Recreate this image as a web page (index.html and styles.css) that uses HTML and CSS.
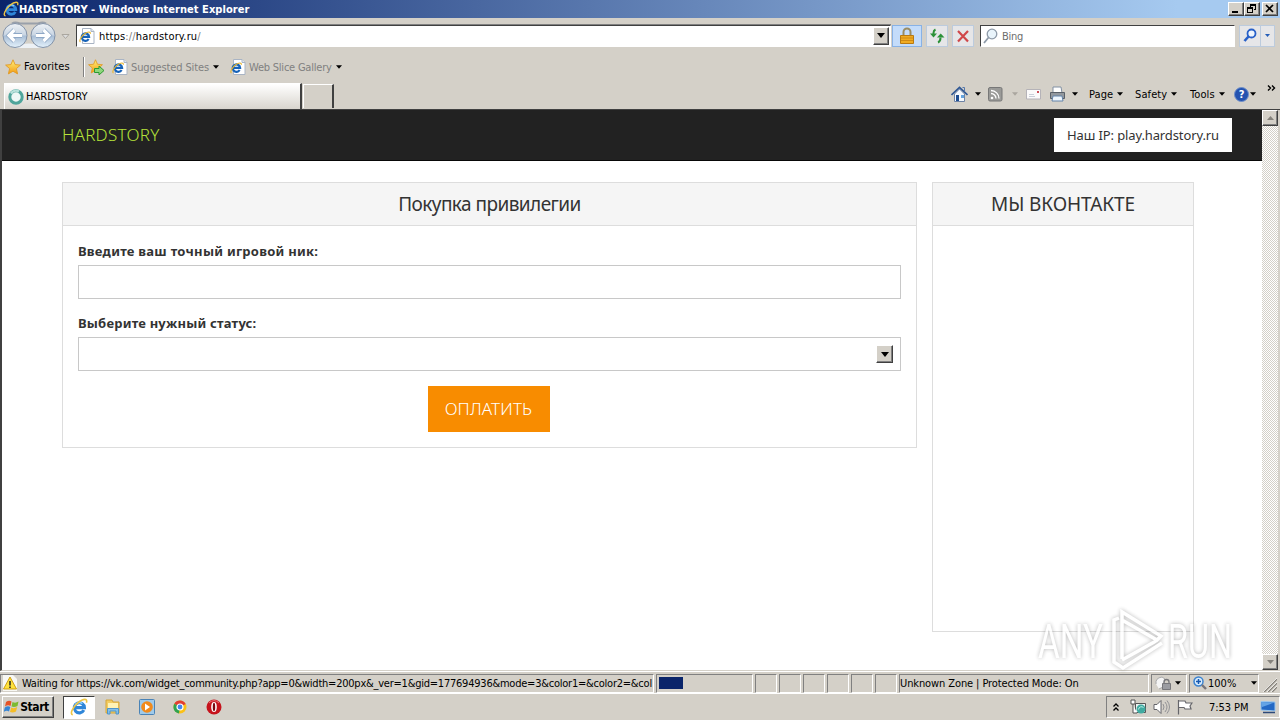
FILE: index.html
```html
<!DOCTYPE html>
<html lang="ru">
<head>
  <meta charset="UTF-8">
  <title>HARDSTORY</title>
  <link rel="stylesheet" href="styles.css">
</head>
<body>
  <!-- Shared icons -->
  <svg class="defs" width="0" height="0">
    <defs>
      <linearGradient id="ball" x1="0" y1="0" x2="0" y2="1">
        <stop offset="0" stop-color="#eef2f6"/><stop offset=".48" stop-color="#c9d5e3"/>
        <stop offset=".52" stop-color="#a9bed6"/><stop offset="1" stop-color="#e4f2fc"/>
      </linearGradient>
      <linearGradient id="gold" x1="0" y1="0" x2="0" y2="1">
        <stop offset="0" stop-color="#fff27a"/><stop offset="1" stop-color="#f39a12"/>
      </linearGradient>
      <symbol id="ie" viewBox="0 0 16 16">
        <path d="M12.300 10.800A4.500 4.500 0 1 1 12.800 8.600H5" fill="none" stroke="#2f86d8" stroke-width="2.800"/>
        <path d="M4.200 7A4.300 4.300 0 0 1 11 5" fill="none" stroke="#8fd0fa" stroke-width="1.200"/>
        <path d="M2.500 14.800C-.5 14.500 2.200 8.400 7 4.300S16 .2 14.600 4.200" fill="none" stroke="#edc544" stroke-width="1.400"/>
      </symbol>
      <symbol id="iepage" viewBox="0 0 16 16">
        <path d="M3.500.500h8.500l3 3v12H3.500z" fill="#fff" stroke="#a9b4c4"/>
        <path d="M12 .500v3h3" fill="#dfe8f4" stroke="#a9b4c4"/>
        <path d="M9.600 11A3.700 3.700 0 1 1 10.100 8.900H3.500" fill="none" stroke="#1763b8" stroke-width="2.200"/>
        <path d="M1.400 14C-.2 13 2 8.400 5.600 5.800s6.400-2 5.600 0" fill="none" stroke="#e9b52c" stroke-width="1.100"/>
      </symbol>
      <symbol id="star" viewBox="0 0 16 16">
        <path d="M8 .8l2.100 4.800 5.300.5-4 3.500 1.200 5.300L8 12.200l-4.600 2.700 1.200-5.300-4-3.500 5.300-.5z" fill="url(#gold)" stroke="#e09a26" stroke-width=".9"/>
      </symbol>
      <symbol id="caret" viewBox="0 0 5 3"><path d="M0 0h5L2.500 3z" fill="currentColor"/></symbol>
    </defs>
  </svg>

  <div class="titlebar">
    <svg width="16" height="16"><use href="#ie"/></svg>
    <span class="window-title">HARDSTORY - Windows Internet Explorer</span>
    <div class="window-buttons">
      <button class="btn3d"><svg width="12" height="10"><path d="M2 8h6" stroke="#000" stroke-width="2"/></svg></button>
      <button class="btn3d"><svg width="12" height="10"><path d="M4.500 1v3M9.500 1v5M10 5.500H8M1.500 4v5M1 8.500h6M6.500 4v5" stroke="#000" fill="none"/><path d="M4 1h6M1 4h6" stroke="#000" stroke-width="2"/></svg></button>
      <button class="btn3d close"><svg width="12" height="10"><path d="M2 1l7 7M9 1L2 8" stroke="#000" stroke-width="1.700"/></svg></button>
    </div>
  </div>

  <!-- Address row -->
  <div class="navrow">
    <svg class="history" width="72" height="30">
      <path d="M12 2.500Q15 .500 20 2.500h18Q43 .500 46 2.500" fill="none" stroke="#99a0aa" stroke-width="2"/>
      <path d="M14 27Q29 18 44 27" fill="#edf1f5"/>
      <circle cx="15" cy="14.500" r="12" fill="url(#ball)" stroke="#8292a8"/>
      <circle cx="43" cy="14.500" r="12" fill="url(#ball)" stroke="#8292a8"/>
      <path d="M22 14.500H9.500M14.500 9L9 14.500l5.500 5.500M36 14.500h12.500M43.500 9l5.500 5.500-5.500 5.500" fill="none" stroke="#8fa8c6" stroke-width="4.800"/>
      <path d="M22 14.500H9.500M14.500 9L9 14.500l5.500 5.500M36 14.500h12.500M43.500 9l5.500 5.500-5.500 5.500" fill="none" stroke="#fff" stroke-width="3.200"/>
      <path d="M62 13.500h7l-3.500 4z" fill="#ddd" stroke="#aaa69f"/>
    </svg>
    <div class="address">
      <svg width="16" height="16"><use href="#iepage"/></svg>
      <span class="url">https<i>://</i>hardstory.ru<i>/</i></span>
      <button class="btn3d drop"><svg width="8" height="5"><use href="#caret"/></svg></button>
    </div>
    <div class="tool lock">
      <svg width="16" height="18"><path d="M4.500 9V5a3.500 3.500 0 0 1 7 0v4" fill="none" stroke="#9a8c62" stroke-width="2"/><path d="M1.500 8.500h13v8h-13z" fill="#f0ab22" stroke="#b97a12"/><path d="M2 11h12M2 13.500h12" stroke="#cf8a14"/></svg>
    </div>
    <div class="tool refresh">
      <svg width="16" height="16"><path d="M6.500 1.500Q4.500 2.500 4.500 5v2" fill="none" stroke="#2c9138" stroke-width="2"/><path d="M1 5.500h7L4.500 9.500z" fill="#2c9138"/><path d="M9 14.500q2.500-1 2.500-5" fill="none" stroke="#2c9138" stroke-width="2"/><path d="M8 9.500h7.500L11.700 5.500z" fill="#2c9138"/></svg>
    </div>
    <div class="tool stop">
      <svg width="14" height="14"><path d="M2 2l10 10.500M12 2L2 12.500" stroke="#d0474a" stroke-width="2.200"/></svg>
    </div>
    <div class="search">
      <svg width="16" height="16"><circle cx="9" cy="6" r="4.800" fill="#e9f4fb" stroke="#8e9aa8" stroke-width="1.300"/><path d="M5.500 9.500L1 15" stroke="#8e9aa8" stroke-width="1.800"/></svg>
      <span>Bing</span>
    </div>
    <div class="tool go">
      <svg width="15" height="15"><circle cx="8.500" cy="5.500" r="4" fill="#eef5fe" stroke="#2860c8" stroke-width="1.800"/><path d="M5.500 8.500L1.500 13" stroke="#2860c8" stroke-width="2.600"/></svg>
    </div>
    <div class="tool go-more"><svg width="5" height="3"><use href="#caret"/></svg></div>
  </div>

  <!-- Favorites bar -->
  <div class="favrow">
    <svg width="16" height="16"><use href="#star"/></svg>
    <span class="fav-label">Favorites</span>
    <svg class="fav-add" width="17" height="16"><use href="#star" width="15" height="15"/><path d="M6.500 9.500H11V7l5 4.500-5 4.500v-2.500H6.500z" fill="#8ed67c" stroke="#2b9a2f"/></svg>
    <svg class="fav-icon" width="16" height="16"><use href="#iepage"/></svg>
    <span class="fav-link suggested">Suggested Sites</span>
    <svg class="caret"><use href="#caret"/></svg>
    <svg class="fav-icon second" width="16" height="16"><use href="#iepage"/></svg>
    <span class="fav-link gallery">Web Slice Gallery</span>
    <svg class="caret"><use href="#caret"/></svg>
  </div>

  <!-- Tabs and command bar -->
  <div class="tabrow">
    <div class="tab">
      <svg width="16" height="16"><circle cx="8" cy="8" r="6.200" fill="#eef8f6" stroke="#4fa59b" stroke-width="3"/><path d="M3 4.500a6.200 6.200 0 0 1 8-2" fill="none" stroke="#b9e2dc" stroke-width="2.400"/></svg>
      <span>HARDSTORY</span>
    </div>
    <div class="new-tab"></div>
    <div class="commands">
      <svg width="17" height="17"><path d="M3.500 8v7.500h10V8L8.500 3z" fill="#f4f8fd" stroke="#6e83a5"/><path d="M.500 9L8.500 1.500l8 7.500" fill="none" stroke="#2f5794" stroke-width="1.700"/><path d="M11.500 1.500h2v4" fill="none" stroke="#5477ab"/><path d="M5 9h3v6H5z" fill="#1d4c91"/><path d="M10 9h3v3h-3z" fill="#65a4de"/></svg>
      <svg class="caret home-caret"><use href="#caret"/></svg>
      <svg width="15" height="15"><rect x=".5" y=".5" width="13.500" height="13.500" rx="1.500" fill="#9a9a98" stroke="#777"/><circle cx="4" cy="11" r="1.300" fill="#fff"/><path d="M3 6.500a5 5 0 0 1 5 5M3 3.500a8 8 0 0 1 8 8" fill="none" stroke="#fff" stroke-width="1.300"/></svg>
      <svg class="caret rss-caret"><use href="#caret"/></svg>
      <svg width="15" height="11"><path d="M.500.500h14v9.500H.500z" fill="#fbfafa" stroke="#b5b3b8"/><path d="M11 2h2v2h-2z" fill="#cb4d57"/><path d="M3 5.500h5M3 7.500h6" stroke="#c9ced8"/></svg>
      <svg class="printer" width="17" height="16"><path d="M4 1h8l1 6H4z" fill="#fff" stroke="#8190a3"/><path d="M1.500 6.500h14v6h-14z" fill="#92989e" stroke="#596069"/><path d="M4 10h9l1 5H3z" fill="#eef6fe" stroke="#6383a9"/></svg>
      <svg class="caret print-caret"><use href="#caret"/></svg>
      <span class="menu page">Page</span><svg class="caret"><use href="#caret"/></svg>
      <span class="menu safety">Safety</span><svg class="caret"><use href="#caret"/></svg>
      <span class="menu tools">Tools</span><svg class="caret"><use href="#caret"/></svg>
      <div class="help">?</div><svg class="caret help-caret"><use href="#caret"/></svg>
      <svg class="more" width="9" height="7"><path d="M1 .500l2.500 2.500L1 5.500M5 .500l2.500 2.500L5 5.500" fill="none" stroke="#000" stroke-width="1.400"/></svg>
    </div>
  </div>

  <!-- Page -->
  <div class="viewport">
    <div class="site">
      <header class="navbar">
        <a class="brand">HARDSTORY</a>
        <div class="ip">Наш IP: play.hardstory.ru</div>
      </header>
      <main class="container">
        <section class="panel shop">
          <h3 class="panel-heading">Покупка привилегии</h3>
          <form class="panel-body">
            <label class="nick">Введите ваш точный игровой ник:</label>
            <div class="control"></div>
            <label class="status">Выберите нужный статус:</label>
            <div class="control select"><span class="btn3d"><svg width="8" height="5"><use href="#caret"/></svg></span></div>
            <button type="button" class="pay">ОПЛАТИТЬ</button>
          </form>
        </section>
        <section class="panel vk">
          <h3 class="panel-heading">МЫ ВКОНТАКТЕ</h3>
        </section>
      </main>
    </div>
    <div class="scrollbar">
      <span class="btn3d"><svg width="7" height="4"><path d="M0 4h7L3.500 0z" fill="#85827c"/></svg></span>
      <span class="btn3d"><svg width="7" height="4"><path d="M0 0h7L3.500 4z" fill="#85827c"/></svg></span>
    </div>
    <svg class="watermark" width="200" height="66">
      <g class="wm-shape">
        <text x="3" y="52" textLength="65" lengthAdjust="spacingAndGlyphs">ANY</text>
        <text x="133" y="52" textLength="64" lengthAdjust="spacingAndGlyphs">RUN</text>
        <path d="M84 12l-5 2v42l9 6 39-25M87 53V6l39 24-4 4-35-20M87 54l34-19"/>
      </g>
    </svg>
  </div>

  <!-- Status bar -->
  <div class="statusbar">
    <div class="pane message">
      <svg width="16" height="16"><path d="M1 0h10l4 4v12H1z" fill="#f8f8f4"/><path d="M8 2l6.500 12H1.500z" fill="#ffe23c" stroke="#cf9e13"/><path d="M8 6v4.500M8 11.500v1.500" stroke="#222" stroke-width="1.500"/></svg>
      <span>Waiting for https://vk.com/widget_community.php?app=0&amp;width=200px&amp;_ver=1&amp;gid=177694936&amp;mode=3&amp;color1=&amp;color2=&amp;col</span>
    </div>
    <div class="pane progress"><div class="bar"></div></div>
    <div class="pane small"></div>
    <div class="pane small"></div>
    <div class="pane small"></div>
    <div class="pane small"></div>
    <div class="pane small"></div>
    <div class="pane small"></div>
    <div class="pane zone"><span>Unknown Zone | Protected Mode: On</span></div>
    <div class="pane privacy">
      <svg width="17" height="16"><path d="M1 9Q0 3 7 2l3 2-2 8-4 2" fill="#f4f4f4" stroke="#aaa"/><path d="M9 9V7a2.500 2.500 0 0 1 5 0v2" fill="none" stroke="#77777b" stroke-width="1.300"/><path d="M7.500 8.500h8v6h-8z" fill="#9b9ca1" stroke="#77777b"/></svg>
      <svg class="caret"><use href="#caret"/></svg>
    </div>
    <div class="pane zoom">
      <svg width="14" height="14"><circle cx="5.500" cy="5.500" r="4.500" fill="#d9ecfc" stroke="#3b82cf" stroke-width="1.500"/><path d="M9 9l4 4" stroke="#77747a" stroke-width="2.400"/><path d="M3 5.500h5M5.500 3v5" stroke="#1558b0" stroke-width="1.500"/></svg>
      <span>100%</span>
      <svg class="caret"><use href="#caret"/></svg>
    </div>
    <svg class="grip" width="14" height="14"><path d="M1 14L14 1M5 14l9-9M9 14l5-5" stroke="#85817a" stroke-width="1.500"/><path d="M0 14L14 0M4 14L14 4M8 14l6-6" stroke="#fff" stroke-width=".7"/></svg>
  </div>

  <!-- Taskbar -->
  <div class="taskbar">
    <button class="btn3d start">
      <svg width="16" height="16"><path d="M2 3q3-2 5.500-.500L6.500 7Q4 5.500 1 7.500z" fill="#e65326"/><path d="M8.500 3q3 1.500 6-.500L13.500 7q-3 1.500-6 .500z" fill="#7dba32"/><path d="M.800 8.500q3-2 5.500-.500L5 12.500q-2.500-1.500-5.300.500z" fill="#3785d4"/><path d="M7.200 8.500q3 1.500 6-.500L12 12.500q-3 1.500-6 .500z" fill="#f5bd27"/></svg>
      <span>Start</span>
    </button>
    <div class="task active"><svg width="18" height="18"><use href="#ie"/></svg></div>
    <svg class="quick explorer" width="16" height="16"><path d="M1 1h6l1 2h6v11H1z" fill="#f2cc62" stroke="#d5a638"/><path d="M3 4h10v5H3z" fill="#fff3b5"/><path d="M2.500 15V9.500h11V15h-2.500v-3h-6v3z" fill="#83bfe9" stroke="#4d94ca"/></svg>
    <svg class="quick media" width="16" height="16"><rect x=".5" y=".5" width="15" height="15" rx="1" fill="#9fcaea" stroke="#4a83b6"/><circle cx="8" cy="8" r="5.800" fill="#f18a1b"/><path d="M6 4.500l5 3.500-5 3.500z" fill="#fff"/></svg>
    <svg class="quick chrome" width="14" height="14"><circle cx="7" cy="7" r="6.500" fill="#fbc116"/><path d="M7 7L1.300 3.800A6.500 6.500 0 0 1 12.700 4z" fill="#e23e33"/><path d="M7 7L1.300 3.800A6.500 6.500 0 0 0 6 13.500z" fill="#31a350"/><circle cx="7" cy="7" r="3" fill="#4287ef" stroke="#fff" stroke-width="1.200"/></svg>
    <svg class="quick opera" width="16" height="16"><circle cx="8" cy="8" r="7.500" fill="#c6131c"/><path d="M3 4a6.500 6.500 0 0 1 10 0" fill="none" stroke="#eb7478"/><ellipse cx="8" cy="8" rx="2.800" ry="5" fill="#fff"/><ellipse cx="8" cy="8" rx="1.200" ry="4.300" fill="#7c0810"/></svg>
    <div class="tray">
      <svg class="chevrons" width="6" height="8"><path d="M.500 3.500L3 1l2.500 2.500M.500 7.500L3 5l2.500 2.500" fill="none" stroke="#000" stroke-width="1.300"/></svg>
      <svg class="network" width="16" height="16"><path d="M5.500 4.500h10v9h-10z" fill="#eef3f3" stroke="#555"/><circle cx="11" cy="10" r="4.500" fill="#40aaa0"/><path d="M8.500 10.500a3 3 0 0 1 5-2" stroke="#b9eee6" fill="none"/><path d="M1 1h4v4H1zM3 5v9h4" fill="#fff" stroke="#555"/></svg>
      <svg class="sound" width="17" height="16"><path d="M1 5.500h3l4-4v13l-4-4H1z" fill="#fff" stroke="#65656a"/><path d="M10 5q2 3 0 6M12 3q4 5 0 10M14 1.500q5 6.500 0 13" fill="none" stroke="#929296"/></svg>
      <svg class="flag" width="16" height="16"><path d="M1.500 1v14.500M2 2h6l1 2h6l-2 3 1 3H8L7 8.500H2" fill="#fff" stroke="#65656a" stroke-width="1.200"/></svg>
      <span class="clock">7:53 PM</span>
      <svg class="desktop" width="16" height="14"><path d="M1 1.500l14 .500v9L1 10z" fill="#2469c5" stroke="#9dc8ee"/><path d="M1.500 2l13 .500L2 7z" fill="#64a4e6"/><path d="M3 12.500h12" stroke="#2d4978" stroke-width="1.500"/></svg>
    </div>
  </div>
</body>
</html>
```
FILE: styles.css
```css
* {
  box-sizing: border-box;
}
body {
  margin: 0;
  width: 1280px;
  height: 720px;
  overflow: hidden;
  display: flex;
  flex-direction: column;
  background: #d4d0c8;
  color: #000;
  font: 11px "DejaVu Sans Condensed", "DejaVu Sans", sans-serif;
  font-stretch: condensed;
  letter-spacing: -0.23px;
  white-space: nowrap;
}
svg {
  display: block;
  flex: none;
}
.defs {
  position: absolute;
}
.caret {
  width: 6px;
  height: 4px;
}

/* Classic raised button */
.btn3d {
  display: flex;
  align-items: center;
  justify-content: center;
  flex: none;
  padding: 0;
  background: #d4d0c8;
  border: 1px solid;
  border-color: #fff #404040 #404040 #fff;
  box-shadow: inset -1px -1px #808080;
}

/* Title bar */
.titlebar {
  height: 18px;
  flex: none;
  display: flex;
  align-items: center;
  padding: 0 2px 0 3px;
  background: linear-gradient(90deg, #0a246a, #a6caf0 92%);
  color: #fff;
}
.window-title {
  font-weight: bold;
  letter-spacing: 0.04px;
}
.window-buttons {
  display: flex;
  margin-left: auto;
}
.window-buttons .btn3d {
  width: 16px;
  height: 14px;
}
.window-buttons .close {
  margin-left: 2px;
}

/* Address row */
.navrow {
  height: 35px;
  flex: none;
  display: flex;
  align-items: center;
}
.address {
  width: 815px;
  height: 22px;
  margin-left: 4px;
  padding: 1px 1px 1px 2px;
  display: flex;
  align-items: center;
  background: #fff;
  border: 1px solid;
  border-color: #404040 #fff #fff #404040;
  box-shadow: 0 -1px #808080;
}
.url {
  margin-left: 4px;
  padding-top: 1px;
  letter-spacing: 0.17px;
}
.url i {
  font-style: normal;
  color: #808080;
}
.address .drop {
  width: 16px;
  height: 18px;
  margin-left: auto;
}
.tool {
  height: 22px;
  display: flex;
  align-items: center;
  justify-content: center;
  background: #e6e6e8;
  border: 1px solid #bccbdd;
}
.lock {
  width: 30px;
  margin-left: 1px;
  background: #c4dcfa;
  border-color: #88b2e6;
}
.refresh {
  width: 22px;
  margin-left: 4px;
}
.stop {
  width: 22px;
  margin-left: 4px;
}
.search {
  width: 255px;
  height: 22px;
  margin-left: 6px;
  padding-left: 2px;
  display: flex;
  align-items: center;
  gap: 3px;
  background: #fff;
  color: #6d6d6d;
  border: 1px solid;
  border-color: #404040 #fff #fff #404040;
}
.search span {
  padding-top: 1px;
}
.go {
  width: 22px;
  margin-left: 4px;
}
.go-more {
  width: 14px;
  border-left: 0;
  color: #245db8;
}

/* Favorites bar */
.favrow {
  height: 28px;
  flex: none;
  display: flex;
  align-items: center;
  padding-left: 5px;
}
.fav-label {
  width: 60px;
  height: 20px;
  margin-left: 3px;
  line-height: 19px;
  letter-spacing: 0.12px;
  border-right: 1px solid #808080;
  box-shadow: 1px 0 #fff;
}
.fav-add {
  margin-left: 4px;
}
.fav-icon {
  margin-left: 7px;
}
.fav-icon.second {
  margin-left: 11px;
}
.fav-link {
  margin-left: 3px;
  color: #808080;
}
.suggested {
  width: 79px;
  letter-spacing: -0.13px;
}
.gallery {
  width: 84px;
  letter-spacing: -0.22px;
}
.fav-link + .caret {
  margin-left: 3px;
}

/* Tabs */
.tabrow {
  height: 28px;
  flex: none;
  display: flex;
}
.tab {
  width: 298px;
  height: 26px;
  margin: 2px 0 0 4px;
  padding-left: 4px;
  display: flex;
  align-items: center;
  gap: 2px;
  background: linear-gradient(#fff, #d9d5ce);
  border: 1px solid #fff;
  border-right: 2px solid #404040;
  border-bottom: 0;
}
.tab svg {
  margin-left: -1px;
}
.tab span {
  letter-spacing: 0.05px;
}
.new-tab {
  width: 31px;
  height: 24px;
  margin: 3px 0 0 1px;
  border: 1px solid #fff;
  border-right: 2px solid #404040;
  border-bottom: 0;
}
.commands {
  flex: 1;
  display: flex;
  align-items: center;
  padding: 0 0 2px 617px;
}
.home-caret {
  margin: 0 7px;
}
.rss-caret {
  margin: 0 8px 0 9px;
  color: #aaa69f;
}
.printer {
  margin-left: 8px;
}
.print-caret {
  margin-left: 6px;
}
.menu {
  margin-left: 11px;
  letter-spacing: 0.1px;
}
.page {
  width: 28px;
}
.safety {
  width: 36px;
  margin-left: 12px;
}
.tools {
  width: 29px;
  margin-left: 13px;
}
.help {
  width: 15px;
  height: 15px;
  margin-left: 9px;
  border: 1px solid #6f8fca;
  border-radius: 50%;
  background: #2453b0;
  color: #fff;
  font-weight: bold;
  line-height: 13px;
  text-align: center;
}
.help-caret {
  margin-left: 1px;
}
.more {
  align-self: flex-start;
  margin: 4px 0 0 11px;
}

/* Page viewport */
.viewport {
  position: relative;
  height: 562px;
  flex: none;
  display: flex;
  background: #fff;
  border: solid #404040;
  border-width: 1px 0 0 2px;
  border-bottom: 1px solid #d4d0c8;
}
.site {
  flex: 1;
  font-family: "Noto Sans", sans-serif;
  font-size: 14px;
  color: #333;
}
.navbar {
  height: 51px;
  display: flex;
  align-items: center;
  padding: 0 30px 0 60px;
  background: #222;
  border-bottom: 1px solid #080808;
}
.brand {
  padding-bottom: 2px;
  color: #b6e23a;
  font-size: 17px;
  font-weight: 300;
  letter-spacing: 0.25px;
}
.ip {
  width: 178px;
  height: 34px;
  margin-left: auto;
  background: #fff;
  line-height: 34px;
  text-align: center;
  font-size: 13px;
  letter-spacing: -0.12px;
}
.container {
  display: flex;
  align-items: flex-start;
  gap: 15px;
  padding: 21px 0 0 60px;
}
.panel {
  border: 1px solid #ddd;
}
.shop {
  width: 855px;
  height: 266px;
}
.vk {
  width: 262px;
  height: 450px;
}
.panel-heading {
  height: 43px;
  margin: 0;
  background: #f5f5f5;
  border-bottom: 1px solid #ddd;
  font-size: 19px;
  font-weight: normal;
  line-height: 43px;
  text-align: center;
}
.shop .panel-heading {
  letter-spacing: -0.55px;
}
.vk .panel-heading {
  letter-spacing: -0.1px;
}
.panel-body {
  display: flex;
  flex-direction: column;
  padding: 15px;
}
.panel-body label {
  height: 20px;
  margin-bottom: 4px;
  font-size: 13px;
  font-weight: bold;
  line-height: 20px;
  letter-spacing: 0.26px;
}
.panel-body .status {
  letter-spacing: 0.2px;
}
.control {
  height: 34px;
  margin-bottom: 14px;
  border: 1px solid #c8c8c8;
}
.select {
  display: flex;
  align-items: center;
  justify-content: flex-end;
  padding-right: 7px;
  margin-bottom: 15px;
  color: #000;
}
.select .btn3d {
  width: 17px;
  height: 18px;
}
.pay {
  align-self: center;
  width: 122px;
  height: 46px;
  margin-right: 2px;
  padding: 0 0 2px;
  border: 0;
  background: #f88c00;
  color: #fff;
  font-family: inherit;
  font-size: 17px;
  font-weight: 300;
  letter-spacing: 0.15px;
}
.scrollbar {
  width: 18px;
  display: flex;
  flex-direction: column;
  justify-content: space-between;
  background: repeating-conic-gradient(#fff 0 25%, #d4d0c8 0 50%) 0 0 / 2px 2px;
  border-right: 2px solid #d4d0c8;
}
.scrollbar .btn3d {
  height: 16px;
}
.watermark {
  position: absolute;
  right: 45px;
  bottom: -2px;
  overflow: visible;
}
.wm-shape {
  font: 400 48px Roboto, sans-serif;
  letter-spacing: 0;
  fill: #fff;
  filter: drop-shadow(0 0 2px rgba(0, 0, 0, 0.35));
  opacity: 0.8;
}
.wm-shape path {
  fill: none;
  stroke: #fff;
  stroke-width: 3.5;
}

/* Status bar */
.statusbar {
  height: 23px;
  flex: none;
  display: flex;
  align-items: center;
  padding-top: 1px;
  gap: 2px;
  border-top: 1px solid #fff;
  border-bottom: 1px solid #fff;
}
.pane {
  height: 19px;
  display: flex;
  align-items: center;
  overflow: hidden;
  border: 1px solid;
  border-color: #808080 #fff #fff #808080;
}
.message {
  width: 654px;
  padding-left: 1px;
  gap: 4px;
}
.progress {
  width: 97px;
  padding: 2px;
}
.bar {
  width: 24px;
  height: 12px;
  background: #0a246a;
}
.small {
  width: 22px;
}
.zone {
  width: 250px;
  letter-spacing: -0.1px;
}
.privacy {
  width: 36px;
  padding-left: 3px;
  gap: 3px;
}
.zoom {
  width: 70px;
  padding-left: 3px;
}
.zoom span {
  margin-left: 1px;
  letter-spacing: 0;
}
.zoom .caret {
  margin: 0 1px 0 auto;
}
.grip {
  margin: 4px 0 0 2px;
}

/* Taskbar */
.taskbar {
  height: 26px;
  flex: none;
  display: flex;
  align-items: center;
  padding-left: 2px;
}
.start {
  width: 52px;
  height: 22px;
  font: bold 12px "DejaVu Sans Condensed", sans-serif;
  letter-spacing: -0.4px;
}
.start svg {
  margin-left: -3px;
}
.task {
  width: 32px;
  height: 23px;
  margin-left: 9px;
  display: flex;
  align-items: center;
  justify-content: center;
  background: #fff;
  border: 1px solid;
  border-color: #404040 #fff #fff #404040;
}
.quick {
  margin-left: 18px;
}
.explorer {
  margin-left: 10px;
}
.opera {
  margin-left: 19px;
}
.tray {
  width: 174px;
  height: 22px;
  margin-left: auto;
  padding-left: 6px;
  display: flex;
  align-items: center;
  border: 1px solid;
  border-color: #808080 #fff #fff #808080;
}
.network {
  margin-left: 11px;
}
.sound {
  margin-left: 7px;
}
.flag {
  margin-left: 7px;
}
.clock {
  width: 51px;
  margin-left: 16px;
  letter-spacing: -0.05px;
}
```
